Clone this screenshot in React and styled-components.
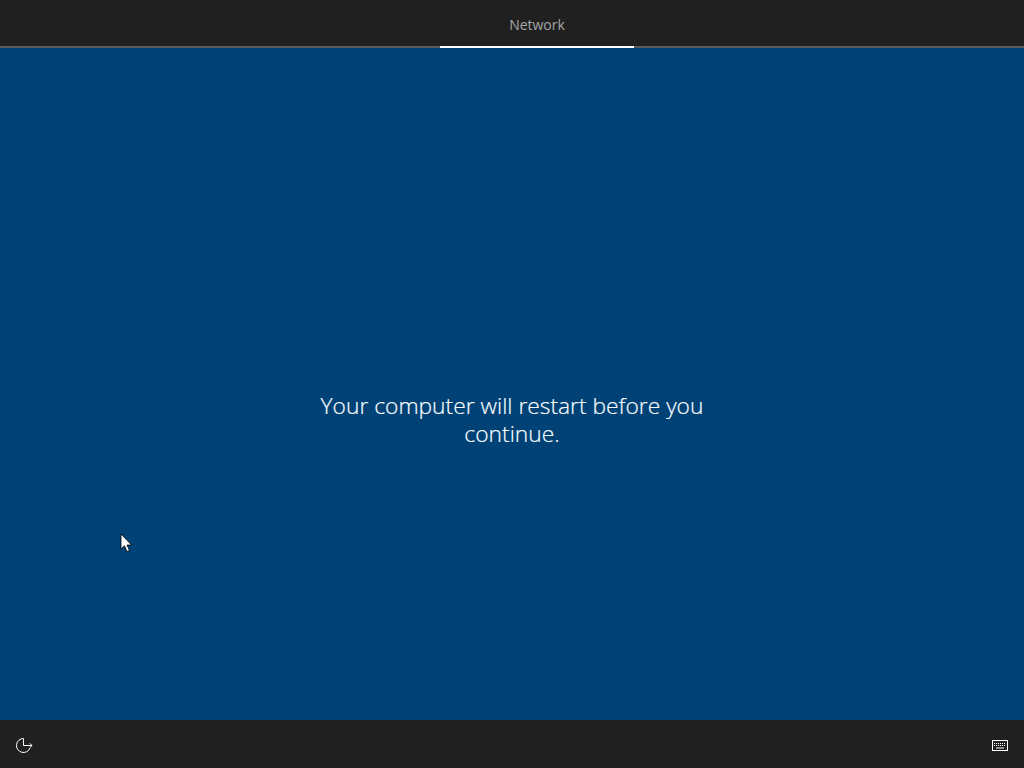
import React from "react";
import styled, { createGlobalStyle } from "styled-components";

const GlobalStyle = createGlobalStyle`
  html, body {
    margin: 0;
    padding: 0;
    height: 100%;
    overflow: hidden;
    background: #004275;
  }
  #root {
    height: 100%;
  }
`;

const Screen = styled.div`
  position: relative;
  display: flex;
  flex-direction: column;
  width: 1024px;
  height: 768px;
  background: #004275;
  font-family: "Open Sans", "Liberation Sans", sans-serif;
`;

const Header = styled.header`
  display: flex;
  flex-shrink: 0;
  height: 46px;
  padding-left: 440px;
  background: #202020;
  border-bottom: 2px solid #5a5a5a;
`;

const Tab = styled.div`
  display: flex;
  align-items: center;
  justify-content: center;
  width: 194px;
  height: 48px;
  padding-top: 2px;
  box-sizing: border-box;
  font-size: 14px;
  color: #a6a6a6;
  border-bottom: 2px solid #ffffff;
`;

const Main = styled.main`
  display: flex;
  flex: 1;
  align-items: center;
  justify-content: center;
  padding-top: 72px;
  box-sizing: border-box;
`;

const Message = styled.p`
  width: 400px;
  margin: 0;
  font-size: 22.8px;
  font-weight: 300;
  line-height: 28px;
  text-align: center;
  color: #f4fbff;
  -webkit-text-stroke: 0.2px #ffffff;
`;

const Footer = styled.footer`
  display: flex;
  flex-shrink: 0;
  align-items: center;
  justify-content: space-between;
  height: 48px;
  padding: 2px 16px 0 15px;
  box-sizing: border-box;
  background: #202020;
`;

const Pointer = styled.svg`
  position: absolute;
  left: 120px;
  top: 533px;
`;

const EaseIcon = () => (
  <svg width="18" height="18" viewBox="0 0 18 18" fill="none" stroke="#ffffff" strokeWidth="1">
    <path d="M15 12 A7 7 0 1 1 8.5 2.5" />
    <path d="M8.5 2.5 V9.5 H17" />
    <path d="M14.8 7.3 L17 9.5 L14.8 11.7" />
  </svg>
);

const KeyboardIcon = () => (
  <svg width="16" height="11" viewBox="0 0 16 11" fill="none">
    <rect x="0.5" y="0.5" width="15" height="10" stroke="#ffffff" />
    <path d="M2 3.5H14M2 5.5H14" stroke="#ffffff" strokeDasharray="1 1" />
    <path d="M4 8H12" stroke="#ffffff" />
  </svg>
);

const App = () => {
  return (
    <Screen>
      <GlobalStyle />
      <Header>
        <Tab>Network</Tab>
      </Header>
      <Main>
        <Message>Your computer will restart before you continue.</Message>
      </Main>
      <Footer>
        <EaseIcon />
        <KeyboardIcon />
      </Footer>
      <Pointer width="13" height="20" viewBox="0 0 13 20">
        <path d="M1 1 V16 L4.5 12.8 L7 18.5 L9.5 17.5 L7 12 H11.5 Z" fill="#ffffff" stroke="#000000" strokeWidth="0.8" />
      </Pointer>
    </Screen>
  );
};

export default App;
